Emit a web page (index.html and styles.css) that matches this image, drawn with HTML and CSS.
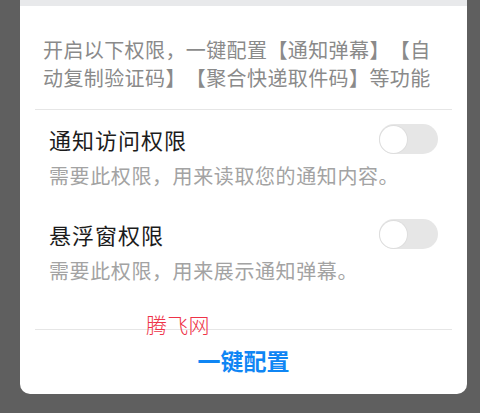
FILE: index.html
```html
<!DOCTYPE html>
<html lang="zh-CN">
<head>
<meta charset="utf-8">
<title>权限配置</title>
<link rel="stylesheet" href="styles.css">
</head>
<body>
<div class="dialog">
  <div class="strip"></div>
  <p class="intro">开启以下权限，一键配置【通知弹幕】【自动复制验证码】【聚合快递取件码】等功能</p>
  <div class="divider"></div>
  <div class="list">
    <div class="item">
      <div class="title">通知访问权限</div>
      <div class="toggle"><span class="knob"></span></div>
      <div class="sub">需要此权限，用来读取您的通知内容。</div>
    </div>
    <div class="item">
      <div class="title">悬浮窗权限</div>
      <div class="toggle"><span class="knob"></span></div>
      <div class="sub">需要此权限，用来展示通知弹幕。</div>
    </div>
  </div>
  <div class="divider bottom"></div>
  <div class="action">一键配置</div>
  <div class="watermark">腾飞网</div>
</div>
</body>
</html>
```
FILE: styles.css
```css
html, body {
  margin: 0;
  padding: 0;
}
body {
  background: #5f5f5f;
  width: 480px;
  height: 413px;
  overflow: hidden;
  font-family: "Noto Sans CJK SC", "Noto Sans", sans-serif;
  text-spacing-trim: space-all;
}
.dialog {
  position: relative;
  margin-left: 20px;
  width: 447px;
  height: 394px;
  background: #ffffff;
  border-radius: 0 0 10px 10px;
  display: flex;
  flex-direction: column;
}
.strip {
  height: 6px;
  background: #e8e9eb;
}
.intro {
  margin: 30px 0 0;
  padding: 0 22px 0 23px;
  font-size: 20px;
  line-height: 28px;
  letter-spacing: 0.4px;
  color: #8a8a8a;
  text-spacing-trim: space-all;
}
.divider {
  margin: 17px 15px 0;
  height: 1px;
  background: #e6e6e6;
}
.divider.bottom {
  margin-top: 44px;
}
.list {
  padding: 14px 29px 0 29px;
  display: flex;
  flex-direction: column;
  gap: 29px;
}
.item {
  display: grid;
  grid-template-columns: 1fr auto;
  row-gap: 8px;
}
.title {
  font-size: 22px;
  line-height: 30px;
  letter-spacing: 1px;
  color: #1c1c1c;
}
.sub {
  grid-column: 1 / 3;
  font-size: 20px;
  line-height: 28px;
  letter-spacing: 0.6px;
  color: #a3a3a3;
}
.toggle {
  width: 59px;
  height: 30px;
  border-radius: 15px;
  background: #e6e6e6;
  display: flex;
  align-items: center;
  padding-left: 1px;
  box-sizing: border-box;
}
.knob {
  width: 27px;
  height: 27px;
  border-radius: 50%;
  background: #ffffff;
  box-shadow: 0 0 0 1px #dedede;
}
.action {
  height: 64px;
  line-height: 61px;
  text-align: center;
  font-size: 23px;
  font-weight: bold;
  color: #0f86f4;
}
.watermark {
  position: absolute;
  left: 126px;
  top: 310px;
  font-size: 21px;
  line-height: 28px;
  font-weight: 300;
  letter-spacing: 0.3px;
  color: #ee3348;
}
```
